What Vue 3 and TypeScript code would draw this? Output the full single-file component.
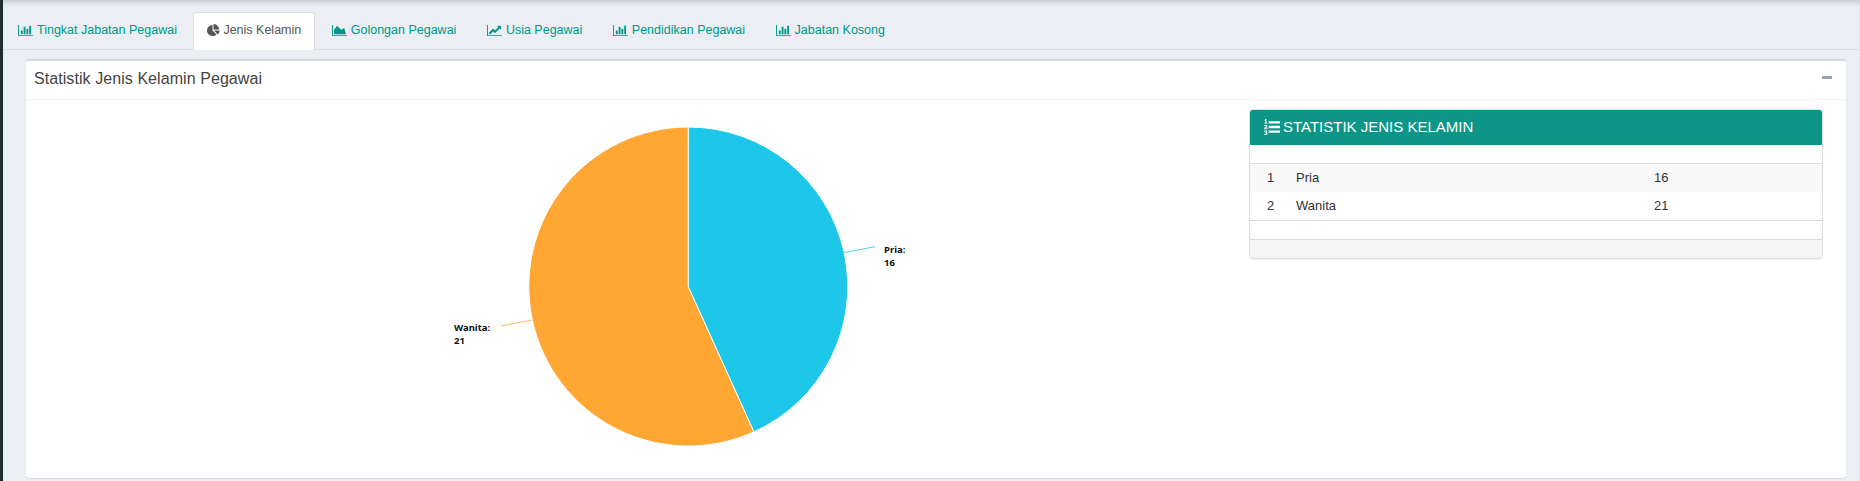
<script setup lang="ts">
const bar = "M640 896v512h-256v-512h256zm384-512v1024h-256v-1024h256zm1024 1152v128h-2048v-1536h128v1408h1920zm-640-896v768h-256v-768h256zm384-384v1152h-256v-1152h256z";
const area = "M2048 1536v128h-2048v-1536h128v1408h1920zm-384-1024l256 896h-1664v-576l448-576 576 576z";
const line = "M2048 1536v128h-2048v-1536h128v1408h1920zm-128-1248v435q0 21-19.5 29.5t-35.5-7.5l-121-121-633 633q-10 10-23 10t-23-10l-233-233-416 416-192-192 585-585q10-10 23-10t23 10l233 233 464-464-121-121q-16-16-7.5-35.5t29.5-19.5h435q14 0 23 9t9 23z";
const pie = "M768 890l546 546q-106 108-247.5 168t-298.5 60q-209 0-385.5-103t-279.5-279.5-103-385.5 103-385.5 279.5-279.5 385.5-103v762zm187 6h774q0 157-60 298.5t-168 247.5zm709-128h-768v-768q209 0 385.5 103t279.5 279.5 103 385.5z";
const listOl = "M381 1620q0 80-54.5 126t-135.5 46q-106 0-172-66l57-88q49 45 106 45 29 0 50.5-14.5t21.5-42.5q0-64-105-56l-26-56q8-10 32.5-43.5t42.5-54 37-38.5v-1q-16 0-48.5 1t-48.5 1v53h-106v-152h333v88l-95 115q51 12 81 49t30 88zm2-627v159h-362q-6-36-6-54 0-51 23.5-93t56.5-68 66-47.5 56.5-43.5 23.5-45q0-25-14.5-38.5t-39.5-13.5q-46 0-81 58l-85-59q24-51 71.5-79.5t105.5-28.5q73 0 123 41.5t50 112.5q0 50-34 91.5t-75 64.5-75.5 50.5-35.5 52.5h127v-60h105zm1409 319v192q0 13-9.5 22.5t-22.5 9.5h-1216q-13 0-22.5-9.5t-9.5-22.5v-192q0-14 9-23t23-9h1216q13 0 22.5 9.5t9.5 22.5zm-1408-899v99h-335v-99h107q0-41 .5-122t.5-121v-12h-2q-8 17-50 54l-71-76 136-127h106v404h108zm1408 387v192q0 13-9.5 22.5t-22.5 9.5h-1216q-13 0-22.5-9.5t-9.5-22.5v-192q0-14 9-23t23-9h1216q13 0 22.5 9.5t9.5 22.5zm0-512v192q0 13-9.5 22.5t-22.5 9.5h-1216q-13 0-22.5-9.5t-9.5-22.5v-192q0-13 9.5-22.5t22.5-9.5h1216q13 0 22.5 9.5t9.5 22.5z";

const tabs = [
  { label: "Tingkat Jabatan Pegawai", d: bar, vb: "0 0 2048 1792", w: 15, active: false },
  { label: "Jenis Kelamin", d: pie, vb: "0 0 1792 1792", w: 13, active: true },
  { label: "Golongan Pegawai", d: area, vb: "0 0 2048 1792", w: 15, active: false },
  { label: "Usia Pegawai", d: line, vb: "0 0 2048 1792", w: 15, active: false },
  { label: "Pendidikan Pegawai", d: bar, vb: "0 0 2048 1792", w: 15, active: false },
  { label: "Jabatan Kosong", d: bar, vb: "0 0 2048 1792", w: 15, active: false },
];
const rows = [
  { no: 1, name: "Pria", total: 16 },
  { no: 2, name: "Wanita", total: 21 },
];

const cx = 688.3;
const cy = 286.5;
const r = 159.5;
const angle = (16 / 37) * Math.PI * 2;
const ex = cx + r * Math.sin(angle);
const ey = cy - r * Math.cos(angle);
const pria = `M${cx} ${cy} L${cx} ${cy - r} A${r} ${r} 0 0 1 ${ex} ${ey} Z`;
const wanita = `M${cx} ${cy} L${ex} ${ey} A${r} ${r} 0 1 1 ${cx} ${cy - r} Z`;
</script>

<template>
  <div class="page">
    <ul class="tabs">
      <li v-for="t in tabs" :key="t.label" class="tab" :class="{ active: t.active }">
        <svg class="tab-icon" :viewBox="t.vb" :width="t.w" height="13" fill="currentColor"><path :d="t.d" /></svg>
        <span>{{ t.label }}</span>
      </li>
    </ul>
    <section class="panel">
      <header class="panel-head">
        <h2>Statistik Jenis Kelamin Pegawai</h2>
        <span class="minus"></span>
      </header>
      <div class="panel-body">
        <svg class="chart" width="1210" height="378" viewBox="26 100 1210 378">
          <path :d="wanita" fill="#ffa633" stroke="#fff" stroke-width="1" />
          <path :d="pria" fill="#1dc7ea" stroke="#fff" stroke-width="1" />
          <path d="M844 252.7 L875 246.7" stroke="#1dc7ea" stroke-width="0.8" fill="none" />
          <path d="M501 326 L532.3 320" stroke="#ffa633" stroke-width="0.8" fill="none" />
          <text class="lbl" x="884" y="253">Pria:</text>
          <text class="lbl" x="884" y="266">16</text>
          <text class="lbl" x="454" y="331">Wanita:</text>
          <text class="lbl" x="454" y="344">21</text>
        </svg>
        <div class="card">
          <div class="card-head">
            <svg viewBox="0 0 1792 1792" width="16" height="16" fill="currentColor"><path :d="listOl" /></svg>
            <span>STATISTIK JENIS KELAMIN</span>
          </div>
          <div class="blank"></div>
          <div v-for="row in rows" :key="row.no" class="row">
            <span class="c-no">{{ row.no }}</span>
            <span class="c-name">{{ row.name }}</span>
            <span>{{ row.total }}</span>
          </div>
          <div class="blank"></div>
          <div class="foot"></div>
        </div>
      </div>
    </section>
  </div>
</template>

<style>
html, body { margin: 0; background: #ecf0f5; }
</style>

<style scoped>
.page {
  width: 1860px;
  height: 481px;
  box-sizing: border-box;
  overflow: hidden;
  background: #ebeef3;
  border-left: 3px solid #1f2d33;
  font-family: "Liberation Sans", Arial, sans-serif;
  box-shadow: inset 0 5px 5px -3px #c3c6cc;
  padding-top: 12px;
}
.tabs {
  display: flex;
  list-style: none;
  margin: 0;
  padding: 0 0 0 1px;
  height: 37px;
  border-bottom: 1px solid #ddd;
}
.tab {
  display: flex;
  align-items: center;
  gap: 4px;
  height: 37px;
  padding: 0 13px 1px;
  margin-right: 2.5px;
  font-size: 12.5px;
  color: #009688;
  box-sizing: border-box;
  border: 1px solid transparent;
}
.tab.active {
  height: 38px;
  padding-bottom: 2px;
  gap: 3px;
  background: #fff;
  color: #555;
  border-color: #ddd;
  border-bottom-color: #fff;
  border-radius: 4px 4px 0 0;
}
.tab-icon { flex: none; }
.panel {
  margin: 9px 14px 0 23px;
  background: #fff;
  height: 419px;
  border-top: 2px solid #d2d6de;
  border-radius: 3px;
  box-shadow: 0 1px 1px #d2d6de;
  box-sizing: border-box;
}
.panel-head {
  height: 39px;
  box-sizing: border-box;
  border-bottom: 1px solid #f4f4f4;
  padding: 0 9px 3px 8px;
  display: flex;
  align-items: center;
  justify-content: space-between;
}
.panel-head h2 {
  margin: 0;
  font-size: 16px;
  font-weight: 400;
  letter-spacing: 0.07px;
  color: #444;
}
.minus {
  width: 10px;
  height: 3px;
  background: #97a0b3;
  margin: 0 5px 3px 0;
}
.panel-body {
  display: flex;
  align-items: flex-start;
}
.chart { flex: none; }
.lbl {
  font-family: "Noto Sans", "DejaVu Sans", sans-serif;
  font-size: 9.5px;
  font-weight: 700;
  fill: #111;
}
.card {
  width: 574px;
  flex: none;
  margin: 9px 0 0 13px;
  border: 1px solid #ddd;
  border-radius: 4px;
  box-sizing: border-box;
  overflow: hidden;
  font-size: 13px;
  color: #333;
  box-shadow: 0 1px 1px rgba(0,0,0,.05);
}
.card-head {
  height: 35px;
  box-sizing: border-box;
  padding: 0 0 2px 14px;
  background: #0d9688;
  color: #fff;
  font-size: 15px;
  display: flex;
  align-items: center;
  gap: 3px;
}
.blank {
  height: 18px;
  border-bottom: 1px solid #ddd;
}
.row {
  display: flex;
  align-items: center;
  height: 26px;
  padding: 0 0 2px 17px;
  background: #f9f9f9;
}
.row + .row { background: #fff; border-bottom: 1px solid #ddd; }
.c-no { width: 29px; }
.c-name { width: 358px; }
.foot {
  height: 18px;
  background: #f5f5f5;
}
</style>
